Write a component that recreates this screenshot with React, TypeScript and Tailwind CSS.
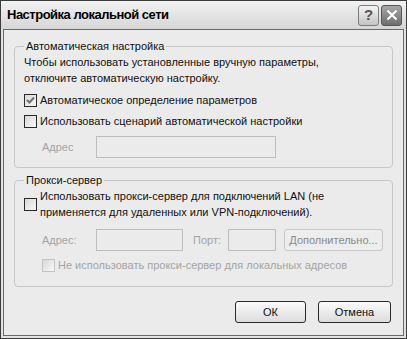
import React from "react";

function Check({ checked, disabled }: { checked?: boolean; disabled?: boolean }) {
  return (
    <span
      className={
        "flex h-[13px] w-[13px] shrink-0 items-center justify-center border bg-gradient-to-br from-[#d8d8d8] to-[#f8f8f8] " +
        (disabled ? "border-[#c4c4c4]" : "border-[#2a2a2a]")
      }
    >
      {checked && (
        <svg width="9" height="9" viewBox="0 0 9 9">
          <path d="M1 4 L3.5 6.5 L8 1.5" fill="none" stroke="#707070" strokeWidth="2" />
        </svg>
      )}
    </span>
  );
}

function Field({ w }: { w: string }) {
  return <div className={"h-[22px] border border-[#bdbdbd] bg-[#ebebeb] " + w} />;
}

export default function App() {
  return (
    <div
      className="flex h-[339px] w-[407px] flex-col border border-[#3c3c3c] bg-[#9a9a9a] text-[11px] leading-[16px] text-[#111]"
      style={{ fontFamily: '"Liberation Sans", Arial, sans-serif' }}
    >
      <div className="flex h-[28px] items-center justify-between bg-gradient-to-b from-[#f2f2f2] to-[#d6d6d6] pl-[6px] pr-[4px]">
        <span className="text-[13px] font-bold tracking-[-0.5px] text-black">Настройка локальной сети</span>
        <div className="flex gap-[2px]">
          <div className="flex h-[21px] w-[21px] items-center justify-center rounded-[3px] border border-[#7c7c7c] bg-gradient-to-b from-[#f4f4f4] to-[#c4c4c4] text-[15px] font-bold text-[#555]">
            ?
          </div>
          <div className="flex h-[21px] w-[21px] items-center justify-center rounded-[3px] border border-[#555] bg-gradient-to-b from-[#a8a8a8] to-[#6e6e6e]">
            <svg width="12" height="12" viewBox="0 0 12 12">
              <path d="M1.5 1.5 L10.5 10.5 M10.5 1.5 L1.5 10.5" stroke="#fff" strokeWidth="2" />
            </svg>
          </div>
        </div>
      </div>
      <div className="flex flex-1 flex-col border-x-2 border-b-2 border-[#e2e2e2]">
        <div className="flex flex-1 flex-col border-x border-b border-t border-[#6a6a6a] bg-[#ebebeb] px-[10px] pt-[8px]">
          <fieldset className="rounded-[4px] border border-[#c8c8c8] pb-[9px] pl-[9px] pr-[8px]">
            <legend className="px-[2px] text-[#111]">Автоматическая настройка</legend>
            <p>
              Чтобы использовать установленные вручную параметры,
              <br />
              отключите автоматическую настройку.
            </p>
            <label className="mt-[6px] flex items-center gap-[3px]">
              <Check checked />
              <span>Автоматическое определение параметров</span>
            </label>
            <label className="mt-[5px] flex items-center gap-[3px]">
              <Check />
              <span>Использовать сценарий автоматической настройки</span>
            </label>
            <div className="mt-[7px] flex items-center">
              <span className="w-[72px] pl-[18px] text-[#a4a4a4]">Адрес</span>
              <Field w="w-[180px]" />
            </div>
          </fieldset>

          <fieldset className="mt-[4px] rounded-[4px] border border-[#c8c8c8] pb-[13px] pl-[9px] pr-[8px]">
            <legend className="px-[2px] text-[#111]">Прокси-сервер</legend>
            <label className="flex items-center gap-[3px]">
              <Check />
              <span>
                Использовать прокси-сервер для подключений LAN (не
                <br />
                применяется для удаленных или VPN-подключений).
              </span>
            </label>
            <div className="mt-[9px] flex items-center">
              <span className="w-[72px] pl-[18px] text-[#a4a4a4]">Адрес:</span>
              <Field w="w-[87px]" />
              <span className="ml-[10px] w-[35px] text-[#a4a4a4]">Порт:</span>
              <Field w="w-[48px]" />
              <div className="ml-[8px] flex h-[22px] w-[99px] items-center justify-center rounded-[3px] border border-[#c8c8c8] bg-[#ededed] text-[#8a8a8a]">
                Дополнительно...
              </div>
            </div>
            <label className="mt-[6px] flex items-center gap-[3px] pl-[18px] text-[#a4a4a4]">
              <Check disabled />
              <span>Не использовать прокси-сервер для локальных адресов</span>
            </label>
          </fieldset>

          <div className="mt-[14px] flex justify-end gap-[12px] pr-[2px]">
            <button className="h-[22px] w-[71px] rounded-[3px] border border-[#2a2a2a] bg-gradient-to-b from-[#fbfbfb] to-[#dcdcdc] text-[11px]">
              ОК
            </button>
            <button className="h-[22px] w-[73px] rounded-[3px] border border-[#2a2a2a] bg-gradient-to-b from-[#fbfbfb] to-[#dcdcdc] text-[11px]">
              Отмена
            </button>
          </div>
        </div>
      </div>
    </div>
  );
}
